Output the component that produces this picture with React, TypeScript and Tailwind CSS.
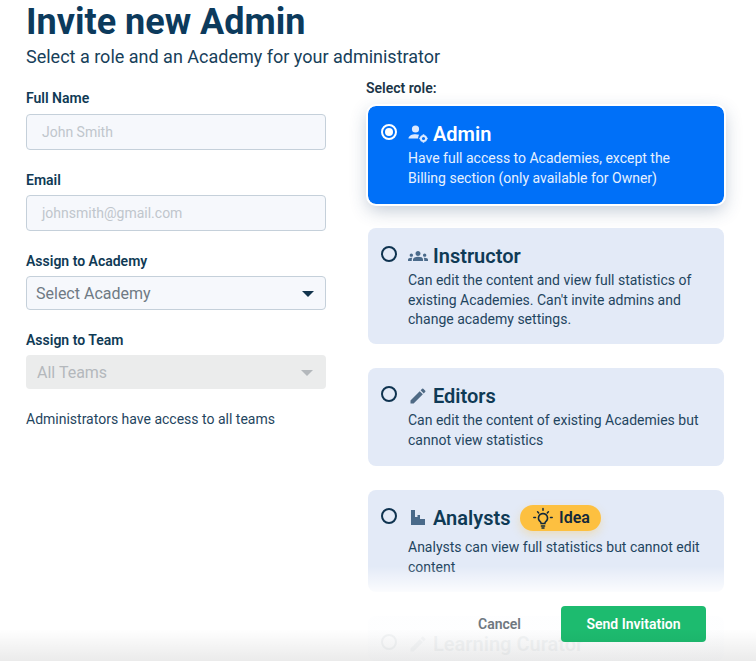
import type { ReactNode } from "react";
import { MdEdit, MdGroups } from "react-icons/md";

function AdminIcon() {
  return (
    <svg viewBox="0 0 20 18" className="h-[18px] w-5 text-[#dbe9ff]" fill="currentColor">
      <circle cx="7.5" cy="4" r="3.6" />
      <path d="M0.5 13.5c0-2.8 3.6-4.3 7-4.3 1.3 0 2.6.2 3.7.6-.7.9-1.1 2.2-1 3.7H.5z" />
      <circle cx="15.5" cy="13.5" r="2.6" fill="none" stroke="currentColor" strokeWidth="2" />
      <path d="M14.7 9.3h1.6v1.4h-1.6zM14.7 16.3h1.6v1.4h-1.6zM11.3 12.7h1.4v1.6h-1.4zM18.3 12.7h1.4v1.6h-1.4z" />
    </svg>
  );
}

function StepsIcon() {
  return (
    <svg viewBox="0 0 16 16" className="size-4 text-[#4a6a8a]" fill="currentColor">
      <path d="M1 0h4v7h2.5V5H10v4h5v6H1z" />
    </svg>
  );
}

function BulbIcon() {
  return (
    <svg viewBox="0 0 24 24" className="size-[24px] text-[#12283a]" fill="none" stroke="currentColor" strokeWidth="1.5" strokeLinecap="round">
      <path d="M12 7.5a4.6 4.6 0 0 0-2.8 8.2c.6.5.9 1 .9 1.8h3.8c0-.8.3-1.3.9-1.8A4.6 4.6 0 0 0 12 7.5z" />
      <path d="M10.4 20h3.2M11 22h2M12 2.5v1.8M4.5 11.5H2.8M21.2 11.5h-1.7M6.6 5.8l1.1 1.2M17.4 5.8l-1.1 1.2" />
    </svg>
  );
}

function Radio({ active }: { active?: boolean }) {
  return (
    <span className={`mt-[3px] flex size-4 shrink-0 items-center justify-center rounded-full border-2 ${active ? "border-white" : "border-[#0f3350]"}`}>
      {active && <span className="size-2 rounded-full bg-white" />}
    </span>
  );
}

function Field({ label, placeholder, className, gap }: { label: string; placeholder: string; className?: string; gap: string }) {
  return (
    <div className={className}>
      <div className="text-[14px] leading-[18px] font-semibold text-[#0f3a55]">{label}</div>
      <div className={`${gap} flex h-9 w-[300px] items-center rounded border border-[#c5d0da] bg-[#f6f8fc] pl-[15px] text-[14px] text-[#c0c6cc]`}>
        {placeholder}
      </div>
    </div>
  );
}

function RoleCard({
  icon,
  title,
  text,
  active,
  badge,
  className,
}: {
  icon: ReactNode;
  title: string;
  text?: ReactNode;
  active?: boolean;
  badge?: boolean;
  className: string;
}) {
  return (
    <div
      className={`flex w-[356px] gap-[11px] rounded-lg pt-[15px] pl-[13px] ${
        active
          ? "bg-[#0070f8] text-white outline-2 outline-white shadow-[0_6px_18px_rgba(40,70,110,0.3)]"
          : "bg-[#e3eaf7] text-[#0f3a55]"
      } ${className}`}
    >
      <Radio active={active} />
      <div>
        <div className="flex h-[26px] items-center">
          <span className="mr-[5px] flex w-5 justify-center">{icon}</span>
          <span className="text-[20px] leading-[26px] font-semibold">{title}</span>
          {badge && (
            <span className="ml-[10px] flex h-[26px] w-[81px] items-center justify-center gap-[4px] rounded-full bg-[#fdc040] pr-[1px] text-[16px] font-semibold text-[#12283a] shadow-[0_4px_10px_rgba(253,192,64,0.3)]">
              <BulbIcon />
              Idea
            </span>
          )}
        </div>
        {text && (
          <p className={`${badge ? "mt-[7px]" : "mt-[2px]"} text-[14px] leading-[19.5px] ${active ? "text-[#e6f0ff]" : "text-[#1f4560]"}`}>{text}</p>
        )}
      </div>
    </div>
  );
}

export default function App() {
  return (
    <div className="relative h-[661px] w-[756px] overflow-hidden bg-white font-['Roboto',sans-serif]">
      <div className="pl-[26px]">
        <h1 className="pt-[2px] text-[36px] leading-[40px] font-bold text-[#0c3a5c]">Invite new Admin</h1>
        <p className="mt-[3px] text-[18px] leading-[24px] text-[#17405a]">Select a role and an Academy for your administrator</p>
      </div>

      <div className="mt-[10px] flex pl-[26px]">
        <div className="w-[342px] pt-[10px]">
          <Field label="Full Name" placeholder="John Smith" gap="mt-[7px]" />
          <Field label="Email" placeholder="johnsmith@gmail.com" gap="mt-[6px]" className="mt-[21px]" />

          <div className="mt-[21px] text-[14px] leading-[18px] font-semibold text-[#0f3a55]">Assign to Academy</div>
          <div className="mt-[6px] flex h-[34px] w-[300px] items-center justify-between rounded border border-[#c5d0da] bg-[#f6f8fc] pt-[1px] pr-[11px] pl-[9px] text-[16px] text-[#6f7a84]">
            Select Academy
            <span className="mt-[1px] border-x-[6px] border-t-[6px] border-x-transparent border-t-[#12344d]" />
          </div>

          <div className="mt-[21px] text-[14px] leading-[18px] font-semibold text-[#0f3a55]">Assign to Team</div>
          <div className="mt-[6px] flex h-[34px] w-[300px] items-center justify-between rounded bg-[#ebecec] pt-[1px] pr-[13px] pl-[11px] text-[16px] text-[#b4b8bc]">
            All Teams
            <span className="border-x-[6px] border-t-[6px] border-x-transparent border-t-[#b4b8bc]" />
          </div>

          <p className="mt-[21px] text-[14px] leading-[18px] text-[#1f4560]">Administrators have access to all teams</p>
        </div>

        <div>
          <div className="-ml-[2px] text-[14px] leading-[18px] font-semibold text-[#1b3547]">Select role:</div>
          <div className="mt-[9px] flex flex-col gap-6">
            <RoleCard
              active
              className="h-[98px]"
              icon={<AdminIcon />}
              title="Admin"
              text={<>Have full access to Academies, except the<br />Billing section (only available for Owner)</>}
            />
            <RoleCard
              className="h-[116px]"
              icon={<MdGroups className="size-5 text-[#4a6a8a]" />}
              title="Instructor"
              text={<>Can edit the content and view full statistics of<br />existing Academies. Can't invite admins and<br />change academy settings.</>}
            />
            <RoleCard
              className="h-[98px]"
              icon={<MdEdit className="size-5 text-[#4f6a85]" />}
              title="Editors"
              text={<>Can edit the content of existing Academies but<br />cannot view statistics</>}
            />
            <RoleCard
              badge
              className="h-[102px]"
              icon={<StepsIcon />}
              title="Analysts"
              text={<>Analysts can view full statistics but cannot edit<br />content</>}
            />
            <RoleCard
              className="h-[45px]"
              icon={<MdEdit className="size-5 text-[#4f6a85]" />}
              title="Learning Curator"
            />
          </div>
        </div>
      </div>

      <div className="absolute inset-x-0 bottom-0 h-[95px] bg-gradient-to-b from-white/0 via-white/95 via-30% to-white/95">
        <div className="flex items-center justify-end pt-[40px] pr-[50px]">
          <span className="mr-[40px] text-[14px] font-semibold text-[#6f7880]">Cancel</span>
          <span className="flex h-9 w-[145px] items-center justify-center rounded bg-[#1dbb6f] text-[14px] font-semibold text-white">
            Send Invitation
          </span>
        </div>
      </div>
      <div className="pointer-events-none absolute inset-x-0 bottom-0 h-8 bg-gradient-to-b from-black/0 to-black/[0.08]" />
    </div>
  );
}
